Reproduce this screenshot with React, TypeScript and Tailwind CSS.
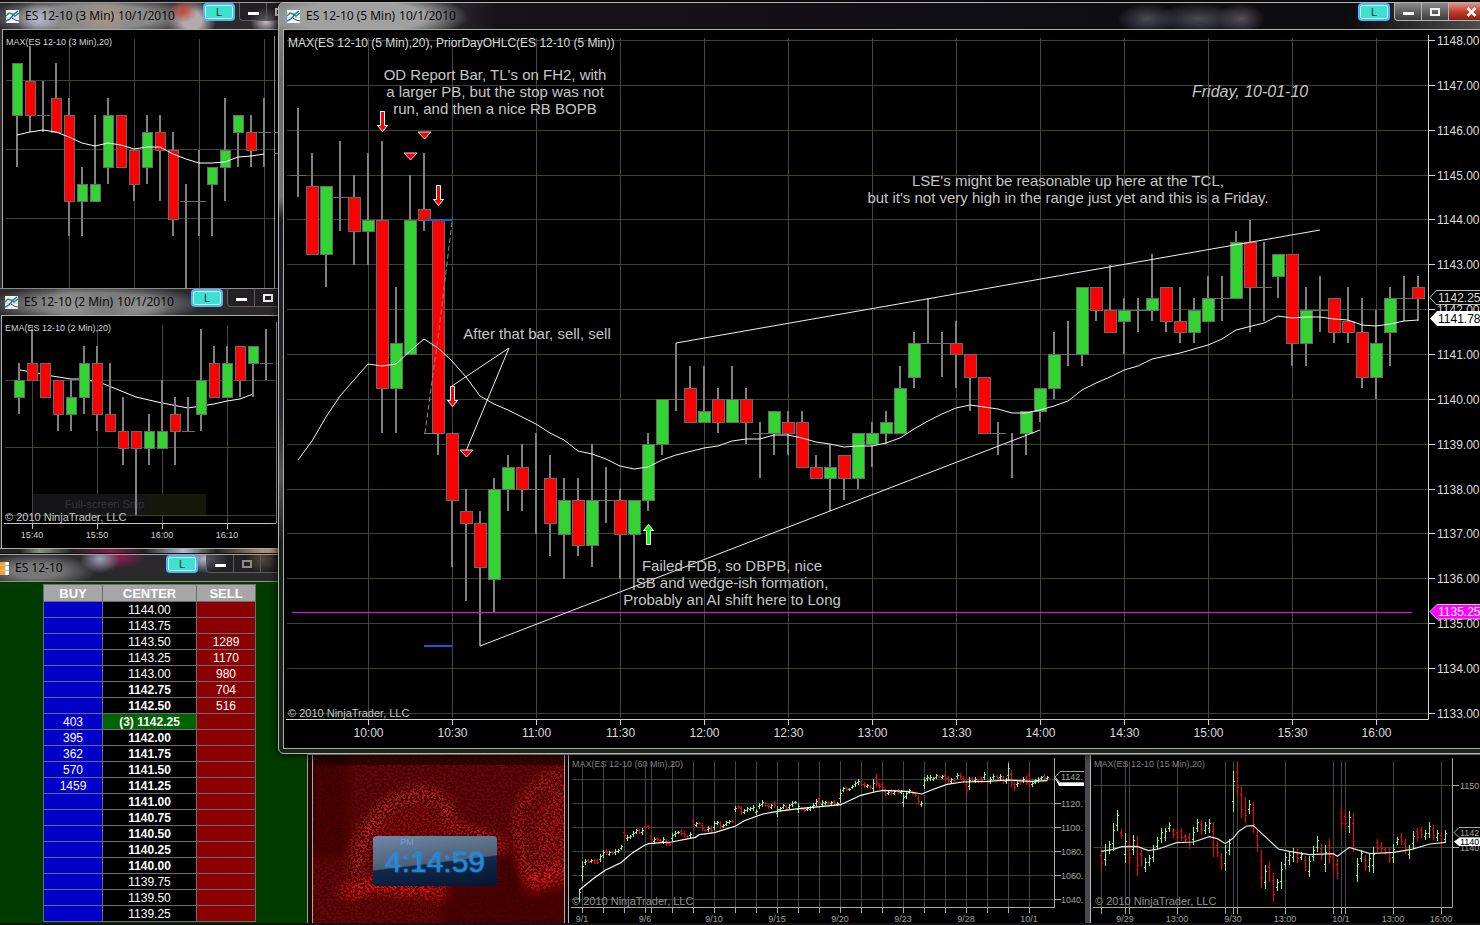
import React from "react";

type Candle = [high: number, open: number, close: number, low: number];
type OhlcBar = [x: number, high: number, low: number, dir: 0 | 1];

const UP = "#32d332";
const DOWN = "#ff0000";
const WICK = "#808080";

/* ---------- series data: [high, open, close, low], points above 1100 ---------- */
const FIVE_MIN: Candle[] = [
  [46.5, 45, 45, 44.5], [45.5, 44.75, 43.25, 43.25], [44.75, 43.25, 44.75, 42.5], [45.75, 44.5, 44.5, 43.75],
  [45, 44.5, 43.75, 43], [45.5, 43.75, 44, 43], [45.75, 44, 40.25, 39.25], [42.5, 40.25, 41.25, 39.25],
  [45, 41, 44, 41], [45.5, 44.25, 44, 43.75], [44, 44, 39.25, 38.75], [39.25, 39.25, 37.75, 36.25],
  [38, 37.5, 37.25, 35.5], [37.5, 37.25, 36.25, 34.5], [38.25, 36, 38, 35.25], [38.75, 38, 38.5, 37.5],
  [39, 38.5, 38, 37.5], [39.25, 38, 38, 37], [38.75, 38.25, 37.25, 36.5], [38.25, 37, 37.75, 36],
  [38.25, 37.75, 36.75, 36.5], [39, 36.75, 37.75, 36.25], [38.5, 37.75, 37.75, 37.25], [38, 37.75, 37, 36],
  [37.75, 37, 37.75, 35.75], [39.25, 37.75, 39, 37.5], [40, 39, 40, 38.75], [41.25, 40, 40, 39.75],
  [40.75, 40.25, 39.5, 39.5], [40.75, 39.5, 39.75, 39.5], [40.25, 40, 39.5, 39.25], [40.75, 39.5, 40, 39.5],
  [40.25, 40, 39.5, 39], [39.5, 39.25, 39.25, 38.25], [39.75, 39.25, 39.75, 38.75], [39.75, 39.5, 39.25, 38.75],
  [39.75, 39.5, 38.5, 38.5], [38.75, 38.5, 38.25, 38.25], [39, 38.25, 38.5, 37.5], [38.75, 38.75, 38.25, 37.75],
  [39.25, 38.25, 39.25, 38], [39.5, 39, 39.25, 38.5], [39.75, 39.25, 39.5, 39], [40.75, 39.25, 40.25, 39.25],
  [41.5, 40.5, 41.25, 40.25], [42.25, 41.25, 41.25, 41.25], [41.5, 41.25, 41.25, 40.5], [41.75, 41.25, 41, 40.25],
  [41, 41, 40.5, 39.75], [40.5, 40.5, 39.25, 39.25], [39.5, 39.25, 39.25, 38.75], [39.25, 39, 39, 38.25],
  [39.75, 39.25, 39.75, 38.75], [40.25, 39.75, 40.25, 39.5], [41.5, 40.25, 41, 40], [41.75, 41, 41, 40.75],
  [42.5, 41, 42.5, 40.75], [42.5, 42.5, 42, 41.75], [43, 42, 41.5, 41.5], [42.25, 41.75, 42, 41],
  [42.25, 42, 42, 41.5], [43.25, 42, 42.25, 41.75], [42.5, 42.5, 41.75, 41.5], [42.5, 41.75, 41.5, 41.25],
  [42.25, 41.5, 42, 41.25], [42.75, 41.75, 42.25, 41.75], [42.75, 42.25, 42.25, 41.75], [43.75, 42.25, 43.5, 42.25],
  [44, 43.5, 42.5, 41.5], [43.5, 42.5, 42.5, 41.75], [43.25, 42.75, 43.25, 42.25], [43.25, 43.25, 41.25, 40.75],
  [42.5, 41.25, 42, 40.75], [42.75, 42, 42, 41.5], [42.25, 42.25, 41.5, 41.25], [42.5, 41.75, 41.5, 41.25],
  [42.25, 41.5, 40.5, 40.25], [42, 40.5, 41.25, 40], [42.5, 41.5, 42.25, 40.75], [42.75, 42.25, 42.25, 41.75],
  [42.75, 42.5, 42.25, 41.75],
];

/* The two small charts count ticks downward from their first level. */
const THREE_MIN: Candle[] = [
  [0, 3, 0, 6], [-1, 1, 3, 4], [1, 3, 3, 4], [0, 2, 4, 4], [2, 3, 8, 10], [6, 8, 7, 10], [3, 8, 7, 8], [2, 6, 3, 7],
  [3, 3, 6, 6], [5, 5, 7, 8], [3, 6, 4, 7], [3, 4, 5, 8], [4, 5, 9, 10], [7, 8, 8, 13], [5, 8, 8, 10], [6, 7, 6, 10],
  [2, 6, 5, 8], [3, 4, 3, 6], [3, 4, 5, 6], [2, 4, 4, 6],
];
const TWO_MIN: Candle[] = [
  [1, 3, 2, 4], [-1, 1, 2, 2], [1, 1, 3, 3], [2, 2, 4, 5], [2, 4, 3, 5], [0, 3, 1, 4], [0, 1, 4, 5], [1, 4, 5, 5],
  [3, 5, 6, 7], [5, 5, 6, 10], [4, 6, 5, 7], [2, 6, 5, 6], [3, 4, 5, 7], [3, 5, 5, 5], [-1, 4, 2, 5], [0, 1, 3, 3],
  [0, 3, 1, 3], [0, 0, 2, 3], [0, 1, 0, 3], [-1, 1, 1, 2],
];

const SIXTY_MIN: OhlcBar[] = [
  [57, 418, 455, 1], [66, 334, 392, 1], [75, 328, 346, 1], [84, 326, 340, 0], [93, 328, 338, 1], [102, 326, 342, 0],
  [111, 328, 342, 0], [119, 312, 336, 1], [128, 300, 324, 1], [137, 298, 314, 0], [146, 302, 318, 1], [155, 302, 316, 0],
  [164, 298, 314, 1], [173, 296, 308, 1], [182, 284, 300, 1], [190, 236, 268, 0], [199, 256, 274, 1], [208, 256, 268, 1],
  [217, 244, 260, 1], [226, 238, 252, 1], [235, 238, 252, 0], [244, 234, 254, 1], [252, 226, 238, 0], [261, 226, 238, 0],
  [270, 252, 276, 0], [279, 262, 282, 1], [288, 262, 274, 0], [297, 268, 280, 0], [306, 262, 282, 1], [315, 266, 288, 0],
  [324, 276, 288, 0], [333, 250, 274, 1], [341, 244, 260, 1], [350, 242, 252, 1], [359, 238, 258, 0], [368, 242, 262, 0],
  [377, 254, 264, 0], [386, 246, 264, 1], [395, 208, 230, 0], [403, 216, 230, 1], [412, 216, 226, 0], [421, 218, 244, 0],
  [430, 236, 246, 0], [439, 228, 246, 1], [448, 228, 248, 0], [457, 214, 240, 1], [466, 214, 226, 1], [475, 214, 236, 0],
  [484, 222, 234, 1], [493, 214, 228, 1], [502, 210, 222, 1], [511, 210, 220, 0], [519, 168, 186, 1], [528, 164, 178, 0],
  [537, 168, 194, 0], [546, 176, 192, 1], [555, 172, 186, 1], [564, 172, 184, 1], [573, 166, 182, 1], [582, 176, 196, 1],
  [591, 158, 178, 1], [600, 150, 170, 1], [608, 156, 170, 0], [617, 158, 178, 0], [626, 162, 178, 1], [635, 154, 174, 0],
  [643, 168, 200, 1], [652, 170, 184, 1], [661, 162, 178, 1], [670, 164, 180, 0], [679, 162, 178, 1], [688, 152, 170, 1],
  [697, 154, 162, 1], [706, 158, 190, 1], [714, 170, 184, 0], [723, 174, 186, 0], [732, 170, 184, 1], [741, 168, 182, 1],
  [750, 160, 178, 1], [759, 146, 168, 1], [768, 138, 166, 0], [777, 150, 170, 1], [786, 152, 166, 1], [795, 154, 166, 0],
  [804, 152, 164, 1], [813, 150, 166, 0], [822, 156, 168, 1], [830, 116, 158, 1], [839, 112, 126, 1], [848, 110, 122, 0],
  [857, 114, 124, 1], [866, 104, 118, 1], [875, 94, 112, 1], [884, 88, 104, 1], [892, 92, 108, 0], [901, 96, 114, 0],
  [910, 102, 114, 1], [919, 106, 118, 0], [928, 86, 128, 1], [937, 72, 110, 0], [946, 98, 118, 0], [955, 92, 122, 0],
  [964, 116, 138, 0], [973, 122, 136, 1], [982, 118, 138, 0], [991, 120, 134, 1], [1000, 118, 132, 0], [1009, 120, 132, 1],
  [1016, 130, 170, 1], [1025, 124, 146, 1], [1034, 118, 132, 1], [1043, 122, 134, 0], [1052, 126, 142, 0],
  [1061, 134, 164, 0], [1070, 154, 170, 1], [1079, 82, 118, 1], [1088, 76, 94, 1], [1097, 76, 92, 1], [1106, 80, 92, 1],
  [1114, 72, 88, 1], [1123, 74, 84, 0], [1132, 74, 86, 1], [1141, 70, 92, 0], [1150, 78, 98, 0], [1159, 84, 98, 1],
  [1168, 84, 96, 0], [1177, 70, 88, 1], [1186, 70, 88, 0], [1195, 78, 100, 0], [1203, 90, 134, 0], [1212, 82, 120, 1],
  [1221, 80, 96, 0], [1230, 80, 98, 1], [1239, 86, 98, 0], [1248, 80, 98, 0], [1257, 66, 90, 1], [1266, 86, 106, 0],
  [1275, 82, 102, 1], [1284, 72, 90, 1], [1293, 74, 90, 0], [1302, 72, 90, 1], [1311, 78, 102, 0], [1320, 84, 102, 1],
  [1327, 40, 94, 1], [1336, 60, 110, 0], [1345, 94, 122, 0], [1354, 94, 112, 1], [1363, 86, 106, 0], [1372, 80, 98, 1],
  [1381, 78, 106, 0], [1390, 64, 110, 0], [1399, 92, 112, 1], [1408, 86, 102, 1], [1417, 82, 98, 1], [1426, 78, 90, 1],
  [1434, 72, 92, 0], [1442, 78, 90, 1],
];
const FIFTEEN_MIN: OhlcBar[] = [
  [64, 300, 356, 0], [76, 282, 348, 1], [88, 274, 312, 1], [100, 218, 302, 1], [112, 180, 244, 1], [124, 236, 266, 0],
  [136, 250, 338, 1], [148, 264, 344, 0], [160, 254, 316, 1], [172, 258, 378, 0], [184, 300, 348, 0], [196, 324, 366, 1],
  [208, 316, 348, 1], [220, 284, 336, 1], [232, 262, 300, 1], [244, 234, 280, 1], [256, 234, 272, 1], [268, 216, 246, 1],
  [280, 234, 264, 0], [292, 236, 272, 0], [304, 234, 274, 0], [316, 252, 276, 0], [328, 250, 296, 0], [340, 232, 286, 1],
  [352, 208, 246, 1], [364, 210, 254, 0], [376, 216, 252, 1], [388, 208, 248, 1], [400, 216, 320, 0], [412, 274, 320, 0],
  [424, 308, 360, 0], [436, 284, 362, 1], [448, 268, 314, 1], [460, 62, 186, 1], [472, 40, 140, 0], [484, 108, 204, 0],
  [496, 140, 218, 0], [508, 150, 192, 1], [520, 156, 250, 0], [532, 236, 306, 0], [544, 300, 414, 0], [556, 346, 418, 1],
  [568, 336, 396, 0], [580, 370, 456, 0], [592, 388, 422, 1], [604, 336, 418, 1], [616, 310, 356, 1], [628, 304, 346, 1],
  [640, 294, 336, 1], [652, 296, 338, 0], [664, 306, 330, 1], [676, 318, 364, 0], [688, 318, 380, 1], [700, 288, 334, 1],
  [712, 258, 306, 1], [724, 282, 330, 0], [736, 284, 366, 1], [748, 268, 338, 0], [760, 306, 362, 0], [772, 328, 386, 0],
  [784, 168, 240, 0], [796, 184, 238, 0], [808, 182, 250, 1], [820, 190, 306, 0], [832, 324, 396, 1], [844, 300, 336, 1],
  [856, 316, 362, 0], [868, 310, 366, 1], [880, 290, 370, 1], [892, 266, 306, 0], [904, 276, 306, 0], [916, 292, 316, 0],
  [928, 294, 338, 0], [940, 282, 338, 1], [952, 262, 286, 1], [964, 250, 286, 0], [976, 268, 312, 0], [988, 284, 326, 1],
  [1000, 242, 298, 1], [1012, 234, 272, 0], [1024, 230, 264, 0], [1036, 240, 270, 1], [1048, 216, 264, 1],
  [1060, 224, 270, 0], [1072, 240, 274, 1], [1084, 242, 290, 0], [1096, 240, 278, 1],
];

const MA5 =
  "298,460 312,441 326,417 340,396 354,380 368,364 382,366 396,364 410,351 424,339 438,348 452,361 466,377 480,396 494,404 508,410 522,417 536,424 550,433 564,440 578,451 592,454 606,459 620,466 634,469 648,467 662,460 676,455 704,448 718,446 732,441 746,439 760,439 774,435 788,435 802,438 816,442 830,444 844,447 858,446 872,446 886,443 900,438 914,429 928,421 942,414 956,408 970,405 984,407 998,409 1012,413 1026,413 1040,410 1054,406 1068,401 1082,390 1096,383 1110,377 1124,370 1138,366 1152,359 1180,353 1208,345 1222,339 1236,330 1264,323 1278,316 1292,318 1306,317 1320,317 1334,319 1348,320 1362,325 1376,326 1390,324 1404,321 1418,320";
const MA3 =
  "17,134 30,131 43,129 56,131 69,136 82,142 95,145 108,142 121,144 134,148 147,146 160,146 173,153 186,158 199,162 212,162 225,161 238,156 251,155 264,153";
const MA2 = "20,370 32,372 52,376 71,379 84,379 104,384 136,397 162,403 188,408 201,406 214,404 227,401 240,399 253,394";
const MA60 =
  "57,420 100,385 135,360 180,338 215,308 250,286 262,281 330,276 400,262 412,254 457,248 520,228 545,212 600,192 643,184 706,176 770,170 830,164 890,136 930,126 955,121 1025,124 1070,132 1105,118 1145,103 1190,96 1265,94 1327,90 1390,94 1442,92";
const MA15 =
  "64,304 100,298 125,290 172,289 205,302 235,297 290,278 340,276 388,260 412,266 436,281 460,264 475,245 500,228 520,227 545,250 595,297 628,304 688,314 760,311 772,319 808,292 870,311 940,307 995,298 1050,282 1096,277";

const range = (n: number) => Array.from({ length: n }, (_, i) => i);

/* ---------- chart pieces ---------- */
function Candles({ data, x0, step, y }: { data: Candle[]; x0: number; step: number; y: (v: number) => number }) {
  return (
    <g shapeRendering="crispEdges">
      {data.map(([h, o, c, l], i) => {
        const x = x0 + step * i;
        const yo = Math.round(y(o));
        const yc = Math.round(y(c));
        const top = Math.min(yo, yc);
        const half = Math.floor(step / 2) - 1;
        return (
          <g key={i}>
            <rect x={x - 1} y={Math.round(y(h))} width="2" height={Math.round(y(l)) - Math.round(y(h))} fill={WICK} />
            {yo === yc ? (
              <rect x={x - half - 1} y={yo} width={half * 2 + 3} height="1" fill="#6e6e6e" />
            ) : (
              <rect
                x={x - half + 0.5}
                y={top + 0.5}
                width={half * 2}
                height={Math.abs(yo - yc)}
                fill={yc < yo ? UP : DOWN}
                stroke="#6a6a6a"
              />
            )}
          </g>
        );
      })}
    </g>
  );
}

function Grid({ xs, ys, x1, x2, y1, y2 }: { xs: number[]; ys: number[]; x1: number; x2: number; y1: number; y2: number }) {
  return (
    <g shapeRendering="crispEdges">
      {ys.map((y) => (
        <line key={y} x1={x1} x2={x2} y1={y} y2={y} stroke="#334833" />
      ))}
      {xs.map((x) => (
        <line key={x} x1={x} x2={x} y1={y1} y2={y2} stroke="#4a434d" />
      ))}
    </g>
  );
}

/* Bars snap to whole pixels; sx and sy turn series units into pixels. */
function OhlcBars({ bars, sx, sy }: { bars: OhlcBar[]; sx: number; sy: number }) {
  return (
    <g shapeRendering="crispEdges">
      {bars.map(([x, h, l, up]) => {
        const px = Math.floor(x * sx);
        const top = Math.round(h * sy);
        const bottom = Math.round(l * sy);
        const quarter = Math.round((bottom - top) / 4);
        const high = top + quarter;
        const low = bottom - 1 - quarter;
        const fill = up ? "#8cf08c" : "#ff0000";
        return (
          <g key={x} fill={fill}>
            <rect x={px} y={top} width="1" height={bottom - top} />
            <rect x={px - 1} y={up ? low : high} width="1" height="1" />
            <rect x={px + 1} y={up ? high : low} width="1" height="1" />
          </g>
        );
      })}
    </g>
  );
}

function DownArrow({ x, y }: { x: number; y: number }) {
  return (
    <path
      d={`M${x - 2} ${y}h4v14h3l-5 6l-5 -6h3z`}
      transform="translate(.5 .5)"
      fill="#f00"
      stroke="#fff"
      strokeWidth="1"
    />
  );
}
function DownTriangle({ x, y }: { x: number; y: number }) {
  return <path d={`M${x - 6} ${y}h13l-6.5 7z`} fill="#f00" stroke="#ddd" strokeWidth="1" />;
}

/* ---------- window chrome ---------- */
function ChartIcon() {
  return (
    <svg width="13" height="13" viewBox="0 0 13 13" className="shrink-0" aria-hidden="true">
      <rect width="13" height="13" fill="#f4f7fa" />
      <path d="M0 3.5H13M0 7.5H13M3.500V13M8.500V13M0 11H13" stroke="#b9c3da" strokeWidth=".6" />
      <path d="M0 6L3 3L6 4L9 6L13 3" fill="none" stroke="#2a9a3a" strokeWidth="1.5" />
      <path d="M0 11L4 9L8 4L12 1" fill="none" stroke="#2468d8" strokeWidth="1.5" />
      <path d="M6 8L9 10L13 11" fill="none" stroke="#444c5c" strokeWidth="1" />
    </svg>
  );
}
function LadderIcon() {
  return (
    <svg width="9" height="13" viewBox="0 0 9 13" className="shrink-0" aria-hidden="true">
      <rect width="9" height="13" fill="#fff" />
      <path d="M0 0h5v13H0z" fill="#f7a020" />
      <path d="M0 3.500H9M0 8.500H9M5 0V13" stroke="#c9b8c8" />
    </svg>
  );
}

function Controls({ active = false, dim = false }: { active?: boolean; dim?: boolean }) {
  const glass = active ? "bg-gradient-to-b from-[#8c8c8c] to-[#3c3c3c]" : "bg-[#1c1a1c]/60";
  const line = active ? "border-[#b4b4b4]" : "border-[#5c5c5c]";
  return (
    <div className={`ml-auto flex shrink-0 items-start ${dim ? "gap-2" : "gap-1"}`}>
      <button className="flex h-[18px] w-8 items-center justify-center rounded-sm border-2 border-[#4fb4ff] bg-[#40e0d0] text-[11px] leading-none text-[#0b3b38] shadow-[inset_0_0_0_1px_#c8fff8]">
        L
      </button>
      <div className={`flex h-[18px] overflow-hidden rounded-b border border-t-0 ${line} ${glass}`}>
        <button aria-label="Minimize" className={`flex w-[27px] items-center justify-center border-r ${line}`}>
          <span className="mt-1 h-[3px] w-[11px] bg-white" />
        </button>
        <button aria-label="Maximize" className={`flex w-[27px] items-center justify-center border-r ${line}`}>
          <span className={`h-2 w-[10px] border-2 ${dim ? "border-[#8c8c8c]" : "border-[#f0f0f0]"}`} />
        </button>
        <button
          aria-label="Close"
          className={`flex w-[45px] items-center justify-center ${active ? "bg-gradient-to-b from-[#d8958c] via-[#c0402c] to-[#8c1c10]" : ""}`}
        >
          <svg width="11" height="10" viewBox="0 0 11 10" aria-hidden="true">
            <path d="M1.500 1L9.500 9M9.500 1L1.500 9" stroke="#f4f4f4" strokeWidth="2.500" />
          </svg>
        </button>
      </div>
    </div>
  );
}

const segoe = "font-['Open_Sans',sans-serif]";

function TitleBar({
  title,
  date,
  icon,
  tone,
  children,
}: {
  title: string;
  date?: string;
  icon: React.ReactNode;
  tone: string;
  children: React.ReactNode;
}) {
  return (
    <header className={`flex h-[26px] items-start ${tone}`}>
      <div className={`flex h-full shrink-0 items-center gap-[6px] whitespace-pre text-[12px] leading-none text-black ${segoe}`}>
        {icon}
        <h2>
          {title}
          {date ? <span className="pl-1">{date}</span> : null}
        </h2>
      </div>
      {children}
    </header>
  );
}

/* ---------- windows ---------- */
function ThreeMinute() {
  return (
    <section className="absolute left-0 top-[2px] flex h-[286px] w-[340px] flex-col border-t border-[#9a9a9a] bg-[#2b292c]">
      <TitleBar
        title="ES 12-10 (3 Min)"
        date="10/1/2010"
        icon={<ChartIcon />}
        tone="pl-[6px] bg-[radial-gradient(ellipse_22px_16px_at_38px_16px,#b9b9cc,transparent),radial-gradient(ellipse_30px_18px_at_105px_14px,#a99888,transparent),radial-gradient(ellipse_14px_12px_at_183px_8px,#c0463a,transparent),radial-gradient(ellipse_24px_22px_at_192px_18px,#b3a9ac_40%,transparent),radial-gradient(ellipse_16px_14px_at_266px_18px,#c9c0c9,transparent),radial-gradient(ellipse_110px_22px_at_95px_14px,#8a8a8a_55%,transparent)]"
      >
        <Controls />
      </TitleBar>
      <div className="min-h-0 flex-1 border-l border-t border-[#a8b0a4] bg-black ml-[2px]">
        <svg viewBox="3 29 275 259" className="h-[259px] w-[275px]" role="img" aria-label="3 minute chart">
          <Grid xs={[69.5, 134.5, 199.5, 264.5]} ys={[79.5, 148.5, 217.5]} x1={6} x2={276} y1={38} y2={287} />
          <Candles data={THREE_MIN} x0={17} step={13} y={(v) => 62.3 + 17.25 * v} />
          <polyline points={MA3} fill="none" stroke="#fff" strokeWidth="1" />
          <path d="M274.500 35V287M275 131.500h3M275 152.500h3" stroke="#b0b4ae" />
          <text x="6" y="44" className="fill-[#d4d4d4] text-[9px]">
            MAX(ES 12-10 (3 Min),20)
          </text>
        </svg>
      </div>
    </section>
  );
}

function TwoMinute() {
  return (
    <section className="absolute left-0 top-[288px] flex h-[265px] w-[328px] flex-col border-t border-[#8a8a8a] bg-[#2b292c]">
      <TitleBar
        title="ES 12-10 (2 Min)"
        date="10/1/2010"
        icon={<ChartIcon />}
        tone="pl-[5px] bg-[radial-gradient(ellipse_30px_18px_at_70px_16px,#949494,transparent),radial-gradient(ellipse_30px_14px_at_140px_18px,#909090,transparent),radial-gradient(ellipse_110px_20px_at_95px_15px,#7c7c7c_55%,transparent)]"
      >
        <Controls />
      </TitleBar>
      <div className="ml-px flex-1 border-l border-t border-[#a8b0a4] bg-black">
        <svg viewBox="2 316 275 232" className="h-[232px] w-[275px]" role="img" aria-label="2 minute chart">
          <Grid xs={[32.5, 97.5, 162.5, 227.5]} ys={[380.5, 447.5, 515.5]} x1={5} x2={276} y1={325} y2={523} />
          <rect x="33" y="494" width="173" height="21" fill="#151518" />
          <rect x="150" y="494" width="56" height="21" fill="#16180c" />
          <text x="65" y="508" className="fill-[#343434] text-[11px]">
            Full-screen Snip
          </text>
          <polyline points={MA2} fill="none" stroke="#fff" strokeWidth="1" />
          <Candles data={TWO_MIN} x0={19} step={13} y={(v) => 346.3 + 16.9 * v} />
          <path d="M4 523.500H276M276.500 322V523M32.500 524v5M97.500 524v5M162.500 524v5M227.500 524v5" stroke="#c4c8c0" />
          <text x="5" y="331" className="fill-[#d4d4d4] text-[9px]">
            EMA(ES 12-10 (2 Min),20)
          </text>
          <text x="5" y="521" className="fill-[#c8c8c8] text-[11px]">
            © 2010 NinjaTrader, LLC
          </text>
          {["15:40", "15:50", "16:00", "16:10"].map((t, i) => (
            <text key={t} x={32 + 65 * i} y="538" textAnchor="middle" className="fill-[#d0d0d0] text-[9px]">
              {t}
            </text>
          ))}
        </svg>
      </div>
      <div className="h-[5px] border-t border-[#a8b0a4] bg-[linear-gradient(90deg,#222_6%,#8a9484_12%,#222_22%,#8c1c50_34%,#222_44%,#b8b8d0_56%,#222_66%,#a89070_80%)]" />
    </section>
  );
}

const LADDER: { price: string; buy?: string; sell?: string; bold?: boolean; last?: boolean }[] = [
  { price: "1144.00" },
  { price: "1143.75" },
  { price: "1143.50", sell: "1289" },
  { price: "1143.25", sell: "1170" },
  { price: "1143.00", sell: "980" },
  { price: "1142.75", sell: "704", bold: true },
  { price: "1142.50", sell: "516", bold: true },
  { price: "(3) 1142.25", buy: "403", bold: true, last: true },
  { price: "1142.00", buy: "395", bold: true },
  { price: "1141.75", buy: "362", bold: true },
  { price: "1141.50", buy: "570", bold: true },
  { price: "1141.25", buy: "1459", bold: true },
  { price: "1141.00", bold: true },
  { price: "1140.75", bold: true },
  { price: "1140.50", bold: true },
  { price: "1140.25", bold: true },
  { price: "1140.00", bold: true },
  { price: "1139.75" },
  { price: "1139.50" },
  { price: "1139.25" },
];

function PriceLadder() {
  const cell = "border border-[#706a76] px-0 pb-0 pt-px";
  return (
    <section className="absolute left-0 top-[554px] flex h-[369px] w-[308px] flex-col border-r border-t border-[#a0a0a0] bg-[#2b292c]">
      <TitleBar
        title="ES 12-10"
        icon={<LadderIcon />}
        tone="bg-[radial-gradient(ellipse_20px_14px_at_100px_4px,#a0a0b8,transparent),radial-gradient(ellipse_24px_12px_at_122px_2px,#8c1c50,transparent),radial-gradient(ellipse_24px_14px_at_205px_4px,#b8b8d0,transparent),radial-gradient(ellipse_16px_14px_at_262px_4px,#a89070,transparent),radial-gradient(ellipse_60px_18px_at_36px_16px,#777_40%,transparent)]"
      >
        <Controls dim />
      </TitleBar>
      <div className="min-h-0 flex-1 overflow-hidden border-t border-[#8c948a] bg-[#003c00] pl-[43px] pt-[2px]">
        <table className="w-[213px] table-fixed border-collapse text-center text-[12px] leading-[14px] text-white">
          <thead>
            <tr className="h-[17px] bg-[#a6a6a6] text-[13px]">
              <th className={`w-[59px] ${cell}`}>BUY</th>
              <th className={cell}>CENTER</th>
              <th className={`w-[59px] ${cell}`}>SELL</th>
            </tr>
          </thead>
          <tbody>
            {LADDER.map((r) => (
              <tr key={r.price} className="h-4">
                <td className={`bg-[#0000c8] ${cell}`}>{r.buy}</td>
                <td className={`${cell} ${r.last ? "bg-[#006400]" : "bg-black"} ${r.bold ? "font-bold" : ""}`}>{r.price}</td>
                <td className={`bg-[#8b0000] ${cell}`}>{r.sell}</td>
              </tr>
            ))}
          </tbody>
        </table>
      </div>
    </section>
  );
}

function Clock() {
  return (
    <section className="absolute left-[308px] top-[754px] h-[169px] w-[261px] border-t border-[#b8b8b8] bg-[#1a0606] px-1">
      <div className="relative h-full overflow-hidden border-x border-[#b0a8a8]">
        <svg viewBox="0 0 251 168" className="h-full w-full" preserveAspectRatio="none" aria-hidden="true">
          <defs>
            <filter id="soft" x="-30%" y="-30%" width="160%" height="160%">
              <feGaussianBlur stdDeviation="6" />
            </filter>
            <filter id="grain" x="0" y="0" width="100%" height="100%">
              <feTurbulence type="fractalNoise" baseFrequency=".42 .5" numOctaves="3" seed="7" />
              <feColorMatrix values="0 0 0 0 .08  0 0 0 0 0  0 0 0 0 0  7 0 0 0 -2.900" />
            </filter>
          </defs>
          <rect width="251" height="168" fill="#5c0a0a" />
          <g filter="url(#soft)" fill="none">
            <path d="M-10 -10h45v110h-45z" fill="#300404" />
            <path d="M130 130h130v60h-130z" fill="#380505" />
            <path d="M185 85h25v50h-25z" fill="#280303" />
            <path d="M60 120V70L100 45L135 60L140 110z" fill="#8c1010" />
            <path d="M240 30h20v90h-40v-60z" fill="#a01414" />
            <path d="M44 120C44 84 62 46 104 38C126 34 136 52 138 66" stroke="#d03434" strokeWidth="9" />
            <path d="M138 70C156 80 180 78 190 96" stroke="#d82424" strokeWidth="9" />
            <path d="M251 18C214 30 206 50 206 72C208 98 212 112 216 124" stroke="#d02828" strokeWidth="8" />
            <path d="M28 138L62 130L130 136" stroke="#ff1414" strokeWidth="14" />
            <path d="M216 128L251 116" stroke="#ff1414" strokeWidth="14" />
          </g>
          <rect width="251" height="168" filter="url(#grain)" />
          <rect width="251" height="10" fill="#000" opacity=".4" />
        </svg>
        <div className="absolute left-[60px] top-[81px] flex h-[50px] w-[124px] flex-col items-center rounded bg-[linear-gradient(173deg,#6f87a8_0%,#4c5f76_52%,#12294a_54%,#041530_100%)] text-[#2187d8]">
          <span className="mr-14 pt-px text-[9px] leading-[10px] text-[#6ba2d6]">PM</span>
          <time className="text-[30px] leading-[30px] [text-shadow:0_0_2px_#3b9df0]">4:14:59</time>
        </div>
      </div>
    </section>
  );
}

const SIXTY_SX = 0.338;
const THIRD = 1 / 3;

function SixtyMinute() {
  const xs = [
    66, 128, 190, 252, 270, 333, 395, 457, 519, 582, 643, 706, 768, 830, 892, 955, 1016, 1079, 1141, 1203, 1265, 1327, 1390,
  ].map((v) => Math.floor(v * SIXTY_SX) + 0.5);
  const ys = [88, 160, 232, 304, 376, 448].map((v) => Math.floor(v / 3) + 0.5);
  const days: [string, number][] = [
    ["9/1", 22], ["9/6", 85], ["9/10", 154], ["9/15", 217], ["9/20", 280], ["9/23", 343], ["9/28", 406], ["10/1", 469],
  ];
  return (
    <section className="absolute left-[568px] top-[754px] h-[169px] w-[518px] border-l border-t border-[#b8b8b8] bg-black">
      <svg viewBox="9 5 516 168" className="h-[168px] w-[516px]" role="img" aria-label="60 minute chart">
        <Grid xs={xs} ys={ys} x1={12} x2={494} y1={11} y2={157} />
        <OhlcBars bars={SIXTY_MIN} sx={SIXTY_SX} sy={THIRD} />
        <g transform="scale(.338 .33333)" fill="none">
          <polyline points={MA60} stroke="#fff" strokeWidth="3.500" />
        </g>
        <path d="M11 157.500H494.500V8" fill="none" stroke="#a4aaa0" />
        <path d={xs.map((x) => `M${x} 158v5`).join("") + ys.map((y) => `M495 ${y}h6`).join("")} stroke="#a4aaa0" />
        <text x="12" y="17" className="fill-[#848484] text-[9px]">
          MAX(ES 12-10 (60 Min),20)
        </text>
        <text x="12" y="155" className="fill-[#909090] text-[11px]">
          © 2010 NinjaTrader, LLC
        </text>
        {days.map(([t, x]) => (
          <text key={t} x={x} y="172" textAnchor="middle" className="fill-[#a0a0a0] text-[9px]">
            {t}
          </text>
        ))}
        {["1120.", "1100.", "1080.", "1060.", "1040."].map((t, i) => (
          <text key={t} x="501" y={57 + 24 * i} className="fill-[#a0a0a0] text-[9px]">
            {t}
          </text>
        ))}
        <path d="M524 32.500H500L495 27L500 21.500H524" fill="#000" stroke="#a4aaa0" />
        <path d="M495 28L500 33H524V36H499Z" fill="#fff" />
        <text x="501" y="30" className="fill-[#a0a0a0] text-[9px]">
          1142.
        </text>
      </svg>
    </section>
  );
}

function FifteenMinute() {
  const xs = [64, 136, 148, 292, 436, 460, 472, 616, 760, 784, 796, 940, 1084].map((v) => Math.floor(v / 3) + 0.5);
  const labels: [string, number][] = [
    ["9/29", 45], ["13:00", 97], ["9/30", 153], ["13:00", 205], ["10/1", 261], ["13:00", 313], ["16:00", 361],
  ];
  return (
    <section className="absolute left-[1085px] right-0 top-[754px] h-[169px] overflow-hidden border-t border-[#b8b8b8] bg-black">
      <div className="h-full border-l-[5px] border-[#4a484c]">
        <svg viewBox="10 5 390 168" className="h-[168px] w-[390px]" role="img" aria-label="15 minute chart">
          <path d="M10.500 5V173" stroke="#b8b8b8" />
          <Grid xs={xs} ys={[35.5, 97.5]} x1={13} x2={372} y1={11} y2={157} />
          <OhlcBars bars={FIFTEEN_MIN} sx={THIRD} sy={THIRD} />
          <g transform="scale(.33333)" fill="none">
            <polyline points={MA15} stroke="#e4e4e4" strokeWidth="3.500" />
          </g>
          <path d="M13 157.500H372.500V8M373 35.500h6M373 97.500h6" fill="none" stroke="#a4aaa0" />
          <path d={xs.map((x) => `M${x} 158v6`).join("")} stroke="#a4aaa0" />
          <text x="14" y="17" className="fill-[#848484] text-[9px]">
            MAX(ES 12-10 (15 Min),20)
          </text>
          <text x="15" y="155" className="fill-[#909090] text-[11px]">
            © 2010 NinjaTrader, LLC
          </text>
          {labels.map(([t, x]) => (
            <text key={x} x={x} y="172" textAnchor="middle" className="fill-[#a0a0a0] text-[9px]">
              {t}
            </text>
          ))}
          <text x="380" y="39" className="fill-[#a0a0a0] text-[9px]">
            1150
          </text>
          <text x="380" y="101" className="fill-[#a0a0a0] text-[9px]">
            1140
          </text>
          <path d="M401 87.500H379L374 82.500L379 77.500H401" fill="#000" stroke="#a4aaa0" />
          <text x="380" y="86" className="fill-[#a0a0a0] text-[9px]">
            1142
          </text>
          <path d="M401 96H379L374 91.500L379 88H401Z" fill="#fff" />
          <text x="380" y="95" className="fill-black text-[9px]">
            1140
          </text>
        </svg>
      </div>
    </section>
  );
}

function Note({ x, y, lines }: { x: number; y: number; lines: string[] }) {
  return (
    <text textAnchor="middle" className="fill-[#c6c6c6] text-[15px]">
      {lines.map((l, i) => (
        <tspan key={l} x={x} y={y + 17 * i}>
          {l}
        </tspan>
      ))}
    </text>
  );
}

const priceY = (p: number) => 40.5 + (48 - p) * 44.85;

function FiveMinute() {
  const xs = range(13).map((i) => 368.5 + 84 * i);
  const ys = range(16).map((i) => Math.floor(40.5 + 44.85 * i) + 0.5);
  return (
    <section className="absolute left-[278px] right-[-16px] top-[2px] flex h-[752px] flex-col overflow-hidden rounded-l-md border border-[#b4b4b4] bg-[linear-gradient(180deg,#8a8a8a_0%,#6a6a6a_10%,#707070_26%,#1c1a20_29%,#2c2a30_55%,#5c545c_63%,#1c1a1c_72%,#142814_80%,#1c241c_100%)] shadow-[0_0_10px_#000]">
      <TitleBar
        title="ES 12-10 (5 Min)"
        date="10/1/2010"
        icon={<ChartIcon />}
        tone="pl-2 bg-[radial-gradient(ellipse_110px_26px_at_80px_14px,#a0a0a0_60%,transparent),radial-gradient(ellipse_30px_16px_at_868px_16px,#4a4a58,transparent),radial-gradient(ellipse_44px_16px_at_920px_16px,#4a4a58,transparent),radial-gradient(ellipse_24px_16px_at_962px_16px,#55505c,transparent),linear-gradient(90deg,#777_0%,#151317_18%,#0c0b0e_88%,#555_100%)]"
      >
        <Controls active />
      </TitleBar>
      <div className="ml-1 min-h-0 flex-1 border-b border-l border-t border-[#a8b0a4] bg-black">
        <svg viewBox="284 30 1211 718" className="h-[718px] w-[1211px]" role="img" aria-label="5 minute chart">
          <Grid xs={xs} ys={ys} x1={287} x2={1428} y1={38} y2={718} />
          <Candles data={FIVE_MIN} x0={298} step={14} y={priceY} />
          <path d="M292 612.500H1412" stroke="#f0f" />
          <path d="M424 220H452M424 646H452" stroke="#0a62d0" strokeWidth="2" />
          <path d="M424 433.500H438" stroke="#888" />
          <path d="M452 222L439 330L425 433" stroke="#8c8c8c" strokeDasharray="5 3" fill="none" />
          <polyline points={MA5} fill="none" stroke="#f4f4f4" strokeWidth="1" />
          <path
            d="M676 343L1320 230M480 646L1040 430M509 348L452 386M509 348L466 451"
            stroke="#f0f0f0"
            strokeWidth="1"
          />
          <DownArrow x={382} y={111} />
          <DownArrow x={438} y={185} />
          <DownArrow x={452} y={386} />
          <DownTriangle x={424} y={132} />
          <DownTriangle x={410} y={153} />
          <DownTriangle x={466} y={450} />
          <path d="M646.500 544.500h4v-14h3l-5 -6l-5 6h3z" fill="#0f0" stroke="#fff" />

          <text x="288" y="47" className="fill-[#dcdcdc] text-[12px]">
            MAX(ES 12-10 (5 Min),20), PriorDayOHLC(ES 12-10 (5 Min))
          </text>
          <Note x={495} y={80} lines={["OD Report Bar, TL's on FH2, with", "a larger PB, but the stop was not", "run, and then a nice RB BOPB"]} />
          <Note x={537} y={339} lines={["After that bar, sell, sell"]} />
          <Note
            x={1068}
            y={186}
            lines={["LSE's might be reasonable up here at the TCL,", "but it's not very high in the range just yet and this is a Friday."]}
          />
          <Note x={732} y={571} lines={["Failed FDB, so DBPB, nice", "SB and wedge-ish formation,", "Probably an AI shift here to Long"]} />
          <text x="1192" y="97" className="fill-[#c6c6c6] text-[16px] italic">
            Friday, 10-01-10
          </text>

          <path
            d={"M286 719.500H1428.500V35" + xs.map((x) => `M${x} 720v5`).join("") + ys.map((y) => `M1429 ${y}h6`).join("")}
            fill="none"
            stroke="#d4d8d0"
          />
          <text x="288" y="717" className="fill-[#c8c8c8] text-[11px]">
            © 2010 NinjaTrader, LLC
          </text>
          {xs.map((x, i) => (
            <text key={x} x={x} y="737" textAnchor="middle" className="fill-[#dcdcdc] text-[12px]">
              {`${10 + Math.floor(i / 2)}:${i % 2 ? "30" : "00"}`}
            </text>
          ))}
          {ys.map((y, i) => (
            <text key={y} x="1437" y={y + 4.5} className="fill-[#dcdcdc] text-[12px]">
              {`${1148 - i}.00`}
            </text>
          ))}
          <path d="M1496 304.500H1436L1430 297.500L1436 290.500H1496" fill="#000" stroke="#b8c0b4" />
          <path d="M1496 326H1437L1430 318.500L1437 311H1496Z" fill="#fff" />
          <path d="M1496 619H1437L1430 611.500L1437 604.500H1496Z" fill="#f0f" stroke="#d8c0d8" />
          <text x="1438" y="302" className="fill-[#dcdcdc] text-[12px]">
            1142.25
          </text>
          <text x="1438" y="323" className="fill-black text-[12px]">
            1141.78
          </text>
          <text x="1438" y="616" className="fill-white text-[12px]">
            1135.25
          </text>
        </svg>
      </div>
      <div className="h-1 shrink-0" />
    </section>
  );
}

export default function App() {
  return (
    <main className="relative min-h-screen overflow-hidden bg-[#141214] font-['Liberation_Sans',Arial,sans-serif]">
      <ThreeMinute />
      <TwoMinute />
      <PriceLadder />
      <Clock />
      <SixtyMinute />
      <FifteenMinute />
      <FiveMinute />
    </main>
  );
}
